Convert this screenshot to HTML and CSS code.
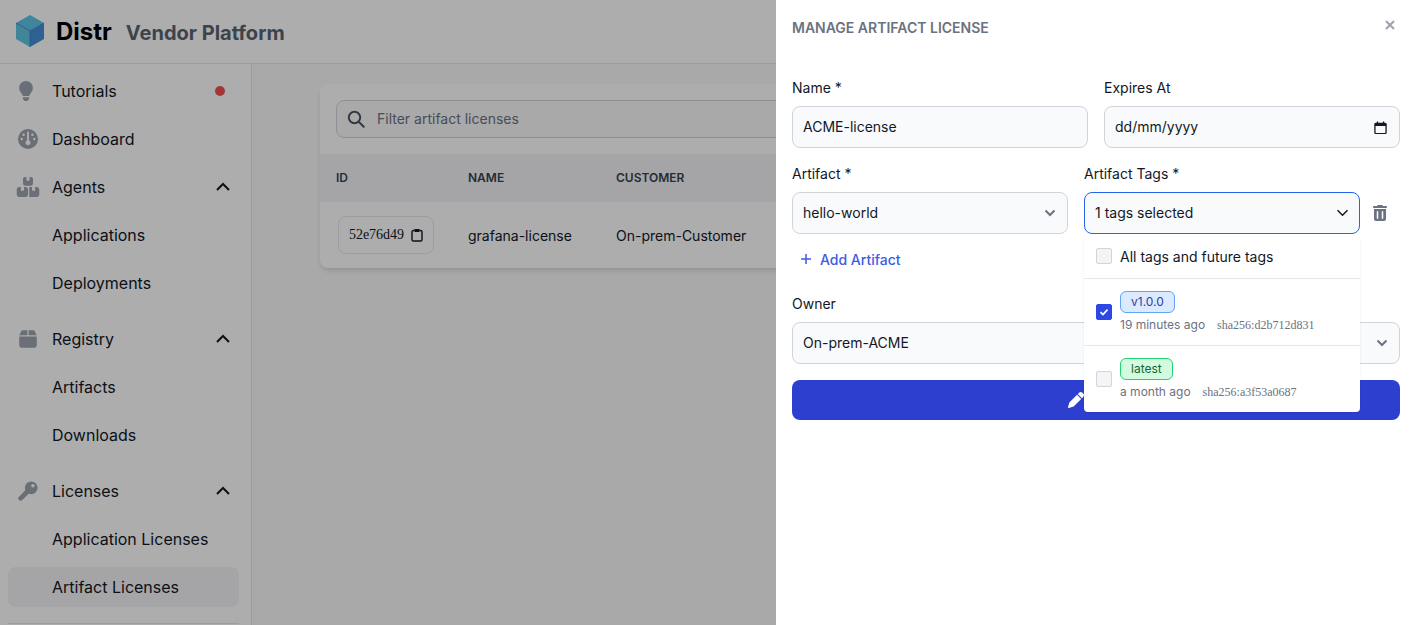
FILE: index.html
```html
<!DOCTYPE html>
<html lang="en">
<head>
<meta charset="utf-8">
<title>Distr Vendor Platform</title>
<link rel="stylesheet" href="styles.css">
</head>
<body>
<div class="app">
  <header class="topbar">
    <svg class="logo" viewBox="0 0 28 32" aria-hidden="true">
      <path class="logo-top" d="M14 0 28 8 14 16 0 8Z"/>
      <path class="logo-left" d="M0 8 14 16V32L0 24Z"/>
      <path class="logo-right" d="M28 8 14 16V32L28 24Z"/>
      <path class="logo-edge" d="M0 8 14 16 28 8M14 16V32"/>
    </svg>
    <span class="brand">Distr</span>
    <span class="platform">Vendor Platform</span>
  </header>
  <div class="shell">
    <aside class="sidebar">
      <nav class="nav">
        <div class="group">
          <a class="item">
            <svg class="nav-icon nav-icon-bulb" viewBox="0 0 384 512"><path d="M272 384c9.600-31.900 29.500-59.100 49.200-86.200c5.200-7.100 10.400-14.200 15.400-21.400c19.800-28.500 31.400-63 31.400-100.300C368 78.800 289.200 0 192 0S16 78.800 16 176c0 37.300 11.600 71.900 31.400 100.300c5 7.200 10.200 14.300 15.400 21.400c19.800 27.100 39.700 54.400 49.200 86.200H272zM192 512c44.200 0 80-35.800 80-80V416H112v16c0 44.200 35.800 80 80 80z"/></svg>
            <span class="item-label">Tutorials</span>
            <span class="dot"></span>
          </a>
          <a class="item">
            <svg class="nav-icon" viewBox="0 0 512 512"><path d="M0 256a256 256 0 1 1 512 0A256 256 0 1 1 0 256zm320 96c0-26.900-16.500-49.900-40-59.300V88c0-13.300-10.700-24-24-24s-24 10.700-24 24V292.700c-23.500 9.500-40 32.500-40 59.300c0 35.300 28.700 64 64 64s64-28.700 64-64zM144 176a32 32 0 1 0 0-64 32 32 0 1 0 0 64zm-16 80a32 32 0 1 0 -64 0 32 32 0 1 0 64 0zm288 32a32 32 0 1 0 0-64 32 32 0 1 0 0 64zM400 144a32 32 0 1 0 -64 0 32 32 0 1 0 64 0z"/></svg>
            <span class="item-label">Dashboard</span>
          </a>
          <a class="item">
            <svg class="nav-icon" viewBox="0 0 576 512"><path d="M248 0H208c-26.500 0-48 21.500-48 48V160c0 35.300 28.700 64 64 64H352c35.300 0 64-28.700 64-64V48c0-26.500-21.500-48-48-48H328V80c0 8.800-7.200 16-16 16H264c-8.800 0-16-7.200-16-16V0zM64 256c-35.300 0-64 28.700-64 64V448c0 35.300 28.700 64 64 64H224c35.300 0 64-28.700 64-64V320c0-35.300-28.700-64-64-64H184v80c0 8.800-7.200 16-16 16H120c-8.800 0-16-7.200-16-16V256H64zM352 512H512c35.300 0 64-28.700 64-64V320c0-35.300-28.700-64-64-64H472v80c0 8.800-7.200 16-16 16H408c-8.800 0-16-7.200-16-16V256H352c-15 0-28.800 5.100-39.700 13.800c4.900 10.400 7.700 22 7.700 34.200V464c0 12.200-2.800 23.800-7.700 34.200C323.200 506.900 337 512 352 512z"/></svg>
            <span class="item-label">Agents</span>
            <svg class="chev-up" viewBox="0 0 16 10"><path d="M2 8 8 2l6 6"/></svg>
          </a>
          <a class="item"><span class="item-label sub">Applications</span></a>
          <a class="item"><span class="item-label sub">Deployments</span></a>
        </div>
        <div class="group">
          <a class="item">
            <svg class="nav-icon" viewBox="0 0 448 512"><path d="M50.700 58.500L0 160H208V32H93.700C75.500 32 58.900 42.300 50.700 58.500zM240 160H448L397.300 58.500C389.100 42.300 372.500 32 354.300 32H240V160zm208 32H0V416c0 35.300 28.700 64 64 64H384c35.300 0 64-28.700 64-64V192z"/></svg>
            <span class="item-label">Registry</span>
            <svg class="chev-up" viewBox="0 0 16 10"><path d="M2 8 8 2l6 6"/></svg>
          </a>
          <a class="item"><span class="item-label sub">Artifacts</span></a>
          <a class="item"><span class="item-label sub">Downloads</span></a>
        </div>
        <div class="group">
          <a class="item">
            <svg class="nav-icon" viewBox="0 0 20 20"><path class="key-shaft" d="M9 11 2.600 17.400"/><path fill-rule="evenodd" d="M13.200 0.400a6.400 6.400 0 1 1 0 12.800 6.400 6.400 0 0 1 0-12.800Zm1.700 2.700a1.700 1.700 0 1 0 0 3.400 1.700 1.700 0 0 0 0-3.400Z"/></svg>
            <span class="item-label">Licenses</span>
            <svg class="chev-up" viewBox="0 0 16 10"><path d="M2 8 8 2l6 6"/></svg>
          </a>
          <a class="item"><span class="item-label sub">Application Licenses</span></a>
          <a class="item active"><span class="item-label sub">Artifact Licenses</span></a>
        </div>
      </nav>
      <div class="nav-rule"></div>
    </aside>
    <main class="main">
      <section class="card">
        <div class="search-wrap">
          <div class="search">
            <svg class="search-icon" viewBox="0 0 18 18"><circle cx="7.500" cy="7.500" r="5.700"/><path d="m12 12 4.700 4.700"/></svg>
            <span>Filter artifact licenses</span>
          </div>
        </div>
        <div class="table-row table-head">
          <span>ID</span><span>Name</span><span>Customer</span><span>Artifacts</span>
        </div>
        <div class="table-row table-body">
          <span><button class="copy">52e76d49
            <svg class="copy-icon" viewBox="0 0 12 14"><path d="M3.500 2.500H2.300A1.300 1.300 0 0 0 1 3.800v8a1.300 1.300 0 0 0 1.300 1.200h7.400a1.300 1.300 0 0 0 1.300-1.200v-8a1.300 1.300 0 0 0-1.300-1.300H8.500"/><path class="copy-clip" d="M3.500 1h5v3h-5z"/></svg>
          </button></span>
          <span>grafana-license</span><span>On-prem-Customer</span><span>hello-world</span>
        </div>
      </section>
    </main>
  </div>
</div>
<div class="overlay"></div>
<aside class="drawer">
  <div class="drawer-head">
    <h2 class="drawer-title">Manage Artifact License</h2>
    <svg class="close" viewBox="0 0 10 10"><path d="M1 1l8 8M9 1 1 9"/></svg>
  </div>
  <form class="form">
    <div class="form-row">
      <div class="field"><label class="label">Name *</label><div class="control">ACME-license</div></div>
      <div class="field"><label class="label">Expires At</label>
        <div class="control control-split">dd/mm/yyyy
          <svg class="calendar" viewBox="0 0 14 14"><path class="cal-line" d="M1 3.500a1 1 0 0 1 1-1h10a1 1 0 0 1 1 1v9a1 1 0 0 1-1 1H2a1 1 0 0 1-1-1z"/><path class="cal-fill" d="M1 2.500h12v3H1zM3 .5h1.500v2H3zM9.500.5H11v2H9.500z"/></svg>
        </div>
      </div>
    </div>
    <div class="artifact-row">
      <div class="field"><label class="label">Artifact *</label>
        <div class="control control-split">hello-world<svg class="chev" viewBox="0 0 12 8"><path d="M1.500 1.500 6 6l4.500-4.500"/></svg></div>
      </div>
      <div class="field tags-field"><label class="label">Artifact Tags *</label>
        <div class="control control-split control-focus">1 tags selected<svg class="chev chev-dark" viewBox="0 0 12 8"><path d="M1 1.200 6 6.200l5-5"/></svg></div>
        <div class="dropdown">
          <div class="option option-all"><span class="check"></span><span class="option-text">All tags and future tags</span></div>
          <div class="option">
            <span class="check check-on"><svg viewBox="0 0 12 12"><path d="M3 6.200 5.100 8.200 9 4"/></svg></span>
            <div class="option-body">
              <span class="badge badge-blue">v1.0.0</span>
              <div class="meta"><span>19 minutes ago</span><span class="sha">sha256:d2b712d831</span></div>
            </div>
          </div>
          <div class="option">
            <span class="check"></span>
            <div class="option-body">
              <span class="badge badge-green">latest</span>
              <div class="meta"><span>a month ago</span><span class="sha">sha256:a3f53a0687</span></div>
            </div>
          </div>
        </div>
      </div>
      <svg class="trash" viewBox="0 0 448 512"><path d="M135.200 17.700C140.600 6.800 151.700 0 163.800 0H284.200c12.100 0 23.200 6.800 28.600 17.700L320 32h96c17.700 0 32 14.300 32 32s-14.300 32-32 32H32C14.300 96 0 81.700 0 64S14.300 32 32 32h96l7.200-14.300zM32 128H416V448c0 35.300-28.700 64-64 64H96c-35.300 0-64-28.700-64-64V128zm112 64c-13.300 0-24 10.700-24 24V424c0 13.300 10.700 24 24 24s24-10.700 24-24V216c0-13.300-10.700-24-24-24zm160 0c-13.300 0-24 10.700-24 24V424c0 13.300 10.700 24 24 24s24-10.700 24-24V216c0-13.300-10.700-24-24-24z"/></svg>
    </div>
    <a class="add-link"><svg class="plus" viewBox="0 0 12 12"><path d="M6 1v10M1 6h10"/></svg>Add Artifact</a>
    <div class="field"><label class="label">Owner</label>
      <div class="control control-split">On-prem-ACME<svg class="chev" viewBox="0 0 12 8"><path d="M1.500 1.500 6 6l4.500-4.500"/></svg></div>
    </div>
    <button class="submit" type="button">
      <svg class="pen" viewBox="0 0 512 512"><path d="M362.700 19.300L314.300 67.700 444.300 197.700l48.400-48.400c25-25 25-65.500 0-90.500L453.300 19.300c-25-25-65.500-25-90.500 0zm-71 71L58.600 323.500c-10.400 10.400-18 23.300-22.200 37.400L1 481.200C-1.500 489.700 .8 498.800 7 505s15.300 8.500 23.700 6.100l120.300-35.400c14.100-4.200 27-11.800 37.400-22.200L421.700 220.300 291.700 90.300z"/></svg>
      Save
    </button>
  </form>
</aside>
</body>
</html>
```

FILE: styles.css
```css
* { box-sizing: border-box; }
html, body { height: 100%; }
body {
  margin: 0;
  overflow: hidden;
  font-family: Inter, "Liberation Sans", sans-serif;
  font-size: 16px;
  color: #111827;
  background: #fff;
}
.app { height: 625px; display: flex; flex-direction: column; }

.topbar {
  height: 64px;
  flex: none;
  display: flex;
  align-items: center;
  padding: 0 0 0 16px;
  border-bottom: 1px solid #e5e7eb;
  background: #fff;
}
.logo { width: 28px; height: 32px; margin-right: 12px; margin-top: -1px; }
.logo-top { fill: #5cc4e8; }
.logo-left { fill: #60c4e0; }
.logo-right { fill: #4590d8; }
.logo-edge { fill: none; stroke: #3a7fc0; stroke-width: .8; }
.brand { font-size: 24px; font-weight: 700; color: #000; margin-right: 14px; }
.platform { font-size: 20px; font-weight: 700; color: #5b6472; margin-top: 2px; }

.shell { flex: 1; display: flex; min-height: 0; }
.sidebar {
  width: 252px;
  flex: none;
  padding: 7px 12px 0 8px;
  border-right: 1px solid #e5e7eb;
  background: #fff;
  display: flex;
  flex-direction: column;
}
.nav { display: flex; flex-direction: column; gap: 16px; }
.group { display: flex; flex-direction: column; gap: 8px; }
.item {
  height: 40px;
  display: flex;
  align-items: center;
  padding: 0 8px;
  border-radius: 8px;
  color: #111827;
}
.item.active { background: #f3f4f6; }
.item-label { flex: 1; margin-left: 12px; font-size: 16px; font-weight: 400; }
.item-label.sub { margin-left: 36px; }
.nav-icon { width: 24px; height: 20px; flex: none; fill: #9ca3af; }
.nav-icon-bulb { margin: 0 2px 0 -2px; }
.key-shaft { fill: none; stroke: #9ca3af; stroke-width: 4.600; stroke-linecap: round; }
.dot { width: 10px; height: 10px; border-radius: 50%; background: #f05252; margin-right: 6px; }
.chev-up { width: 16px; height: 10px; flex: none; fill: none; stroke: #111827; stroke-width: 2; }
.nav-rule { height: 1px; background: #e5e7eb; margin-top: 16px; }

.main { flex: 1; padding: 20px 68px; background: #f9fafb; min-width: 0; }
.card {
  background: #fff;
  border-radius: 8px;
  box-shadow: 0 4px 6px -1px rgba(0,0,0,.1), 0 2px 4px -2px rgba(0,0,0,.1);
  overflow: hidden;
}
.search-wrap { padding: 16px; }
.search {
  height: 38px;
  display: flex;
  align-items: center;
  gap: 12px;
  padding: 0 10px 1px;
  border: 1px solid #d1d5db;
  border-radius: 8px;
  background: #f9fafb;
  color: #6b7280;
  font-size: 14px;
}
.search-icon { width: 18px; height: 18px; fill: none; stroke: #4b5563; stroke-width: 2; stroke-linecap: round; }
.table-row { display: grid; grid-template-columns: 132px 148px 1fr 1fr; padding: 0 16px; align-items: center; font-size: 14px; }
.table-head {
  height: 48px;
  padding-bottom: 2px;
  background: #f3f4f6;
  color: #374151;
  font-size: 12px;
  font-weight: 600;
  text-transform: uppercase;
}
.table-body { height: 66px; color: #111827; }
.copy {
  height: 38px;
  width: 96px;
  margin-left: 2px;
  display: flex;
  align-items: center;
  justify-content: center;
  gap: 7px;
  padding: 0;
  border: 1px solid #e5e7eb;
  border-radius: 8px;
  background: #fff;
  color: #111827;
  font-family: "Liberation Serif", serif;
  font-size: 14px;
}
.copy-icon { width: 12px; height: 14px; fill: none; stroke: #111827; stroke-width: 1.400; }
.copy-clip { fill: #111827; stroke: none; }

.overlay { position: fixed; inset: 0; background: rgba(0,0,0,.32); }
.drawer {
  position: fixed;
  top: 0;
  right: 0;
  width: 637px;
  height: 100%;
  padding: 0 13px 0 16px;
  background: #fff;
}
.drawer-head { height: 70px; padding-top: 19px; display: flex; justify-content: space-between; align-items: flex-start; }
.drawer-title {
  margin: 0;
  font-size: 14px;
  line-height: 18px;
  font-weight: 600;
  text-transform: uppercase;
  color: #6b7280;
}
.close { width: 10px; height: 10px; margin: 1px 5px 0 0; fill: none; stroke: #9ca3af; stroke-width: 2; }

.form { display: flex; flex-direction: column; }
.form-row { display: grid; grid-template-columns: 1fr 1fr; gap: 16px; margin-bottom: 8px; }
.artifact-row { display: grid; grid-template-columns: 276px 276px 16px; column-gap: 16px; align-items: end; }
.field { display: flex; flex-direction: column; min-width: 0; }
.label { display: block; height: 36px; padding-top: 8px; font-size: 14px; line-height: 20px; font-weight: 400; color: #111827; }
.control {
  height: 42px;
  display: flex;
  align-items: center;
  padding: 0 10px 2px;
  border: 1px solid #d1d5db;
  border-radius: 8px;
  background: #f9fafb;
  font-size: 14px;
  color: #111827;
}
.control-split { justify-content: space-between; }
.control-focus { border-color: #2563eb; }
.chev { width: 12px; height: 8px; flex: none; fill: none; stroke: #6b7280; stroke-width: 2; margin: 2px 1px 0 0; }
.chev-dark { stroke: #111827; width: 15px; margin-right: -1px; stroke-width: 1.500; }
.calendar { width: 13px; height: 13px; margin: 2px 2px 0 0; }
.cal-line { fill: none; stroke: #111827; stroke-width: 1.400; }
.cal-fill { fill: #111827; }

.tags-field { position: relative; }
.dropdown {
  position: absolute;
  top: 100%;
  left: 0;
  right: 0;
  margin-top: 2px;
  z-index: 5;
  background: #fff;
  border-radius: 4px;
  box-shadow: 0 1px 2px rgba(0,0,0,.1);
}
.option { display: flex; align-items: center; gap: 8px; height: 67px; padding: 0 12px; border-top: 1px solid #e5e7eb; }
.option-all { height: 42px; border-top: 0; padding-bottom: 2px; }
.option-text { font-size: 14px; color: #111827; }
.check {
  width: 16px;
  height: 16px;
  flex: none;
  display: block;
  border: 1px solid #d1d5db;
  border-radius: 2px;
  background: #f3f4f6;
}
.check-on { background: #2d46e6; border-color: #2d46e6; }
.check-on svg { display: block; width: 14px; height: 14px; fill: none; stroke: #fff; stroke-width: 1.500; }
.option-body { display: flex; flex-direction: column; align-items: flex-start; gap: 3px; }
.badge { height: 22px; display: flex; align-items: center; padding: 0 10px; border: 1px solid; border-radius: 6px; font-size: 12px; }
.badge-blue { background: #dbeafe; border-color: #60a5fa; color: #2d3fa8; }
.badge-green { background: #d3fbe0; border-color: #22d36f; color: #166534; }
.meta { display: flex; gap: 12px; align-items: baseline; font-size: 12px; line-height: 18px; color: #6b7280; }
.sha { font-family: "Liberation Serif", serif; }

.trash { width: 14px; height: 16px; fill: #6b7280; margin: 0 0 13px -3px; }
.add-link {
  display: flex;
  align-items: center;
  gap: 8px;
  height: 20px;
  margin: 15px 0 0 8px;
  font-size: 14px;
  font-weight: 500;
  color: #3b5ce6;
}
.plus { width: 12px; height: 12px; fill: none; stroke: #3b5ce6; stroke-width: 1.500; }
.add-link + .field { margin-top: 17px; }
.submit {
  height: 40px;
  margin-top: 16px;
  display: flex;
  align-items: center;
  justify-content: center;
  gap: 8px;
  border: 0;
  border-radius: 8px;
  background: #2d3fcf;
  color: #fff;
  font-family: inherit;
  font-size: 14px;
  font-weight: 500;
}
.pen { width: 16px; height: 16px; fill: #fff; }
```
